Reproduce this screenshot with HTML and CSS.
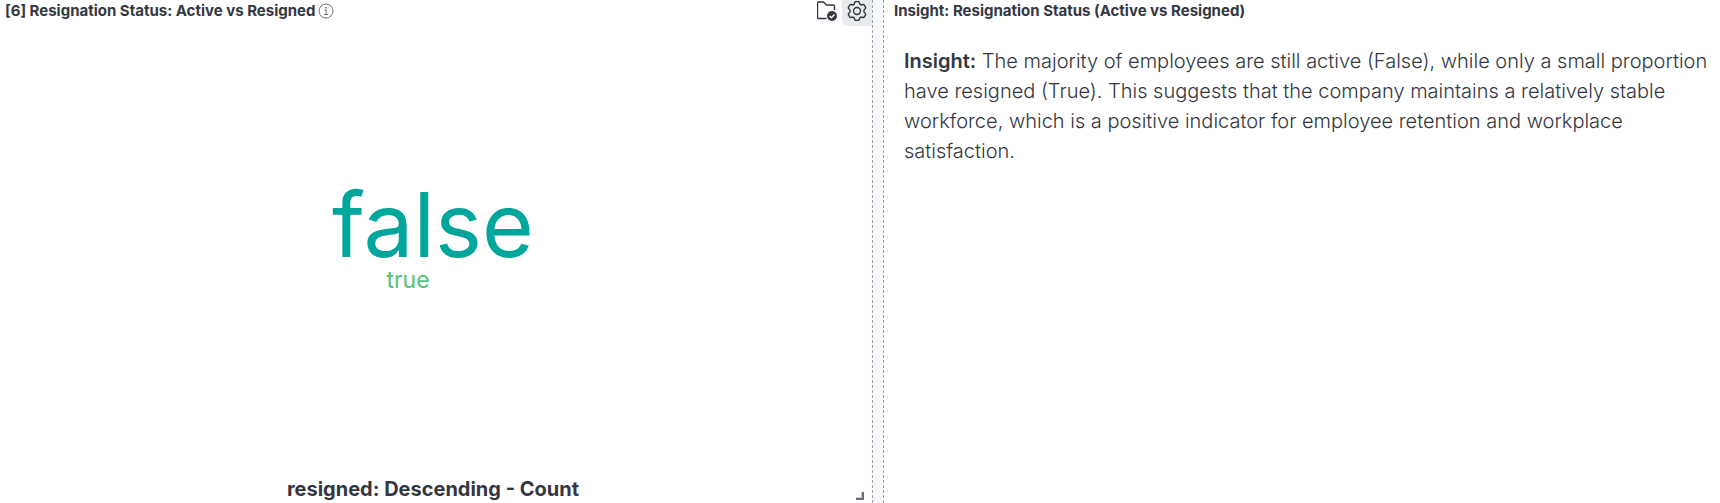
FILE: index.html
```
<!DOCTYPE html>
<html lang="en">
<head>
<meta charset="utf-8">
<title>Resignation Status</title>
<link rel="stylesheet" href="styles.css">
</head>
<body>
<main class="dashboard">
  <section class="panel panel-cloud">
    <header class="panel-header">
      <h2 class="panel-title">[6] Resignation Status: Active vs Resigned</h2>
      <svg class="info-icon" viewBox="0 0 16 16" role="img" aria-label="Panel description"><circle cx="8" cy="8" r="7"/><path d="M6.4 7H8.2V11.4M6 11.5H10.2"/><circle class="dot" cx="8" cy="4.7" r=".9"/></svg>
      <div class="panel-actions">
        <button class="icon-button" type="button" aria-label="Library panel">
          <svg class="folder-icon" viewBox="0 0 20 20"><path d="M9.5 17.5H1.5C.9 17.5.5 17.1.5 16.5V2C.5 1.400.9 1 1.500 1H6.500L9.500 4H16.500C17.100 4 17.500 4.400 17.500 5V9"/><circle class="badge" cx="15" cy="15" r="5"/><path class="check" d="M12.600 15L14.400 16.700L17.500 13.500"/></svg>
        </button>
        <button class="icon-button icon-button-active" type="button" aria-label="Panel options">
          <svg class="gear-icon" viewBox="0 0 20 20"><path d="M7.700 1.400Q8 .6 8.800.6H11.200Q12 .6 12.300 1.400L12.900 3.200L14.100 3.900L16 3.500Q16.900 3.300 17.300 4.100L18.500 6.200Q18.900 6.900 18.300 7.600L17 9.100V10.900L18.300 12.400Q18.900 13.100 18.500 13.800L17.300 15.900Q16.900 16.700 16 16.500L14.100 16.100L12.900 16.800L12.300 18.600Q12 19.400 11.200 19.400H8.800Q8 19.400 7.700 18.600L7.100 16.800L5.900 16.100L4 16.500Q3.100 16.700 2.700 15.900L1.500 13.800Q1.100 13.100 1.700 12.400L3 10.900V9.100L1.700 7.600Q1.100 6.900 1.500 6.200L2.700 4.100Q3.100 3.300 4 3.500L5.900 3.900L7.100 3.200Z"/><circle cx="10" cy="10" r="3.500"/></svg>
        </button>
      </div>
    </header>
    <div class="cloud">
      <span class="word word-large">false</span>
      <span class="word word-small">true</span>
    </div>
    <p class="cloud-label">resigned: Descending - Count</p>
    <svg class="resize-handle" viewBox="0 0 8 8" aria-hidden="true"><path class="handle-edge" d="M5 0V5H0V6H6V0Z"/><path d="M6 0H8V8H0V6H6Z"/></svg>
  </section>
  <section class="panel panel-text">
    <header class="panel-header">
      <h2 class="panel-title">Insight: Resignation Status (Active vs Resigned)</h2>
    </header>
    <p class="insight"><strong>Insight:</strong> The majority of employees are still active (False), while only a small proportion have resigned (True). This suggests that the company maintains a relatively stable workforce, which is a positive indicator for employee retention and workplace satisfaction.</p>
  </section>
</main>
</body>
</html>
```
FILE: styles.css
```
* {
  box-sizing: border-box;
}

body {
  margin: 0;
  background: #fff;
  color: #343741;
  font-family: Inter, "Liberation Sans", sans-serif;
}

.dashboard {
  display: grid;
  grid-template-columns: 873fr 837fr;
  gap: 10px;
  min-height: 100vh;
  background: #f7f8fc;
}

.panel {
  position: relative;
  display: flex;
  flex-direction: column;
  min-width: 0;
  background: #fff;
}

.panel-cloud {
  border-right: 1px dashed #98a2b3;
}

.panel-text {
  border-left: 1px dashed #98a2b3;
}

.panel-header {
  display: flex;
  align-items: flex-start;
  height: 26px;
  padding-left: 5px;
}

.panel-text .panel-header {
  padding-left: 10px;
}

.panel-title {
  margin: 0;
  font-size: 15px;
  font-weight: 700;
  line-height: 22px;
}

.info-icon {
  width: 16px;
  height: 16px;
  margin: 3px 0 0 3px;
  fill: none;
  stroke: #69707d;
}

.info-icon .dot {
  fill: #69707d;
  stroke: none;
}

.panel-actions {
  display: flex;
  margin-left: auto;
}

.icon-button {
  display: flex;
  align-items: flex-start;
  justify-content: center;
  width: 30px;
  height: 26px;
  padding: 1px 0 0;
  border: 0;
  background: none;
}

.icon-button-active {
  border-radius: 0 0 0 6px;
  background: #e9eaec;
}

.icon-button svg {
  width: 20px;
  height: 20px;
  fill: none;
  stroke: #343741;
  stroke-width: 1.4;
}

.folder-icon .badge {
  fill: #343741;
  stroke: none;
}

.folder-icon .check {
  stroke: #fff;
}

.cloud {
  flex: 1;
  display: flex;
  flex-direction: column;
  align-items: center;
  justify-content: center;
  padding: 0 6px 32px 0;
}

.word-large {
  color: #00a69b;
  font-size: 89px;
  line-height: 88px;
}

.word-small {
  margin-right: 50px;
  color: #57c17b;
  font-size: 23px;
  line-height: 22px;
}

.cloud-label {
  margin: 0;
  padding: 0 6px 2px 0;
  font-size: 20px;
  font-weight: 700;
  line-height: 24px;
  text-align: center;
}

.resize-handle {
  position: absolute;
  right: 8px;
  bottom: 3px;
  width: 8px;
  height: 8px;
  fill: #69707d;
}

.resize-handle .handle-edge {
  fill: #c2c6cd;
}

.insight {
  margin: 0;
  padding: 20px 4px 0 20px;
  font-size: 20px;
  font-weight: 300;
  line-height: 30px;
}

.insight strong {
  font-weight: 600;
}
```
